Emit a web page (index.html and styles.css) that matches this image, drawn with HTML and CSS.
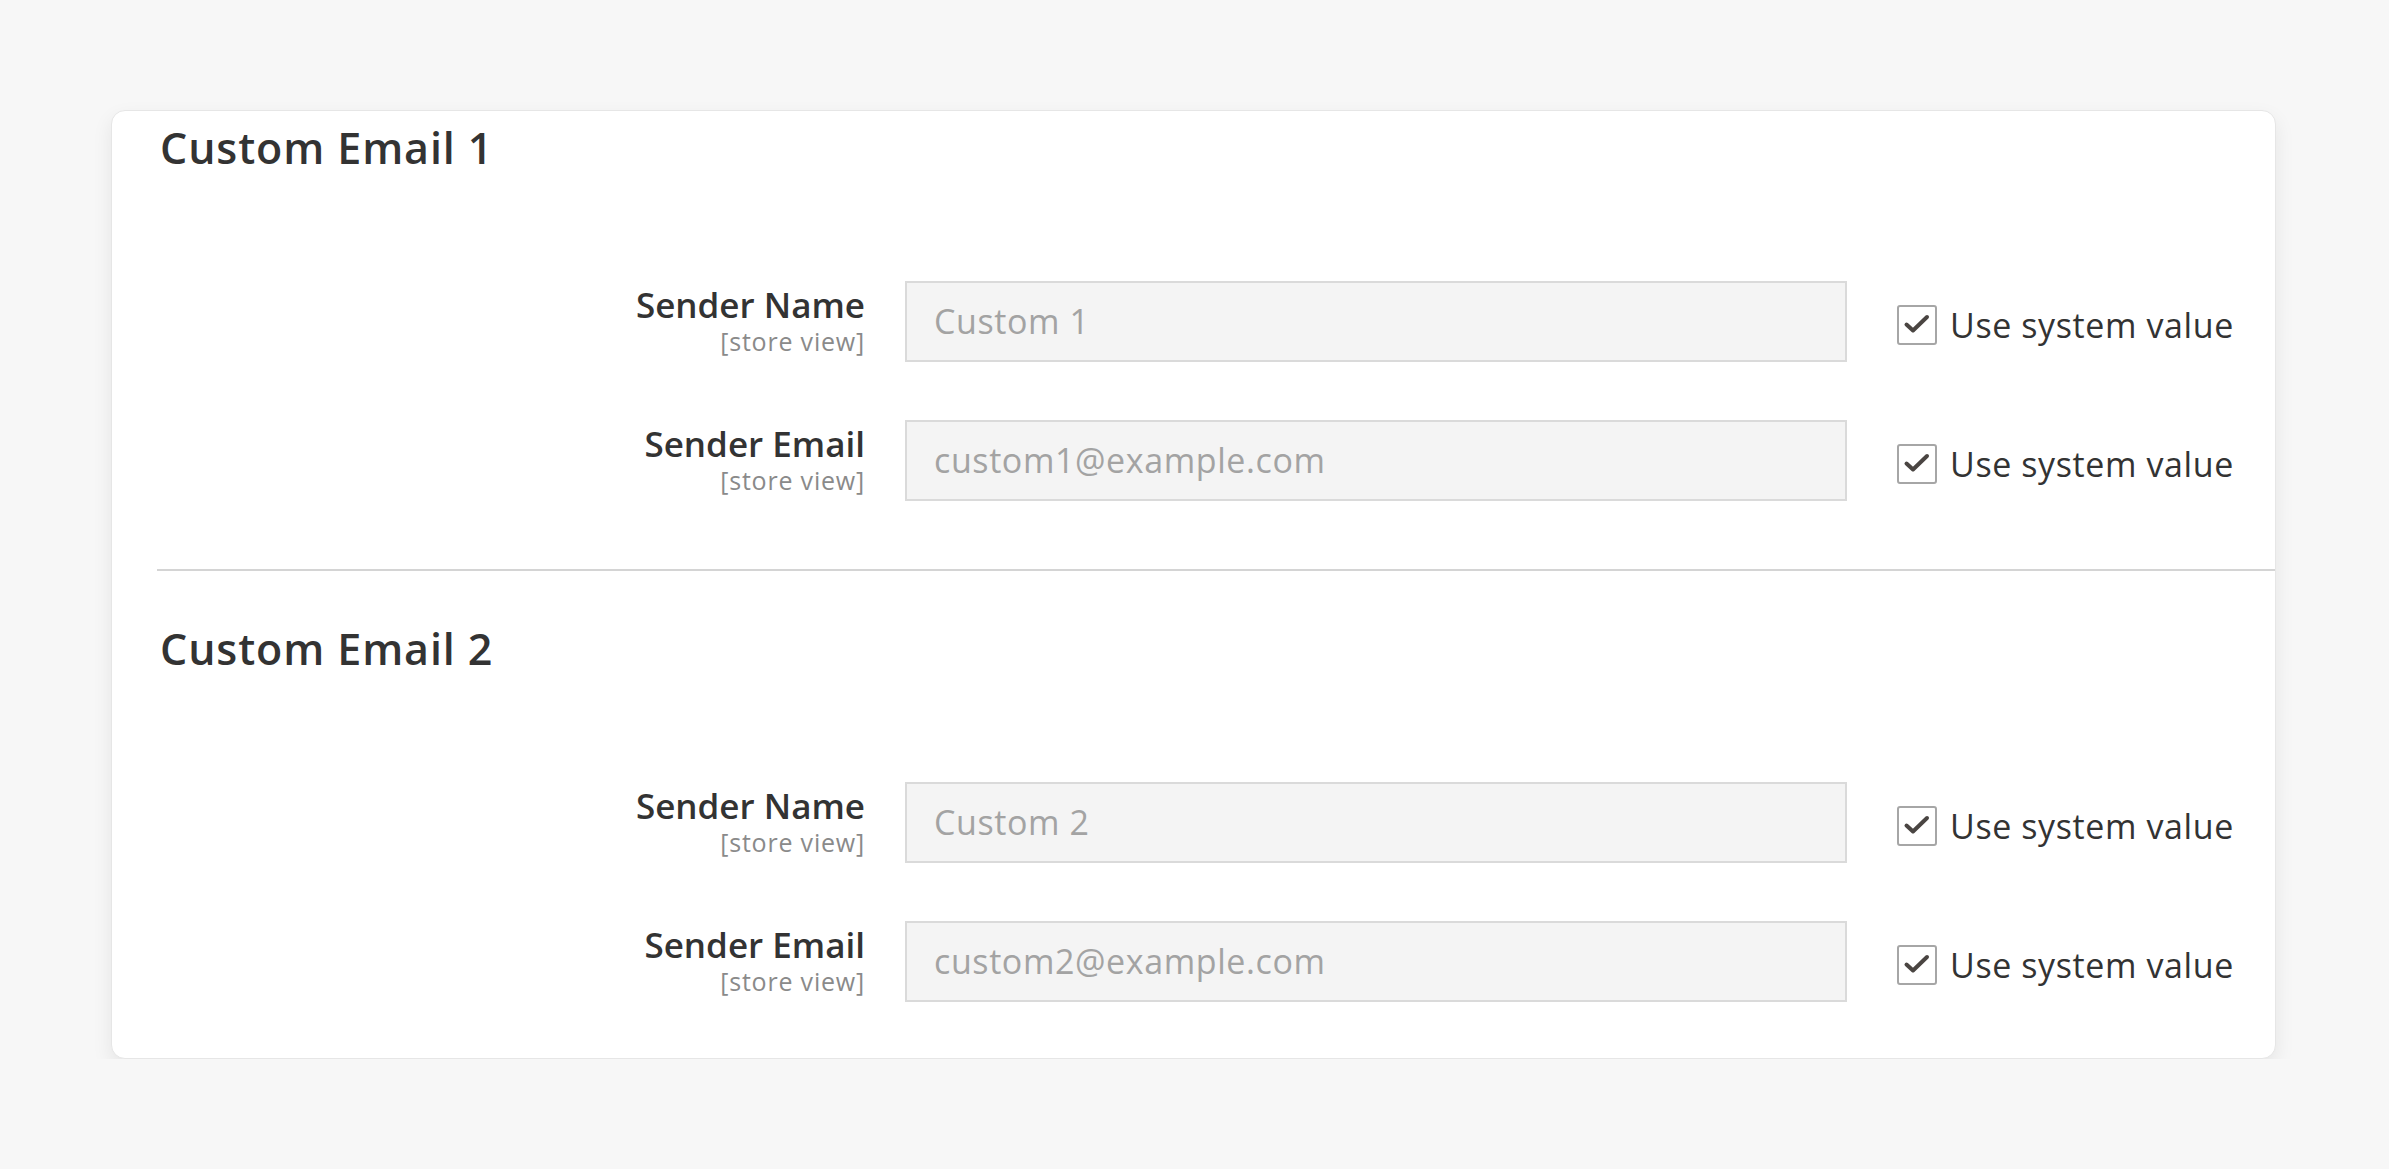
FILE: index.html
```html
<!DOCTYPE html>
<html>
    <head>
        <meta charset="utf-8">
        <title>Custom Emails</title>
        <link rel="stylesheet" href="styles.css">
    </head>
    <body>
        <div id="card">
            <div class="section">
                <h2 class="title">Custom Email 1</h2>
                <div class="fields">
                    <div class="row">
                        <div class="label">
                            <span class="name">Sender Name</span>
                            <span class="scope">[store view]</span>
                        </div>
                        <div class="input">Custom 1</div>
                        <div class="sys">
                            <span class="box"><svg viewBox="0 0 36 36"><path d="M7.5 17.5 L14 23.5 L28 10" fill="none" stroke="#4a4542" stroke-width="4" stroke-linecap="round" stroke-linejoin="round"/></svg></span>
                            <span class="sys-text">Use system value</span>
                        </div>
                    </div>
                    <div class="row">
                        <div class="label">
                            <span class="name">Sender Email</span>
                            <span class="scope">[store view]</span>
                        </div>
                        <div class="input">custom1@example.com</div>
                        <div class="sys">
                            <span class="box"><svg viewBox="0 0 36 36"><path d="M7.5 17.5 L14 23.5 L28 10" fill="none" stroke="#4a4542" stroke-width="4" stroke-linecap="round" stroke-linejoin="round"/></svg></span>
                            <span class="sys-text">Use system value</span>
                        </div>
                    </div>
                </div>
            </div>
            <div class="divider"></div>
            <div class="section">
                <h2 class="title">Custom Email 2</h2>
                <div class="fields">
                    <div class="row">
                        <div class="label">
                            <span class="name">Sender Name</span>
                            <span class="scope">[store view]</span>
                        </div>
                        <div class="input">Custom 2</div>
                        <div class="sys">
                            <span class="box"><svg viewBox="0 0 36 36"><path d="M7.5 17.5 L14 23.5 L28 10" fill="none" stroke="#4a4542" stroke-width="4" stroke-linecap="round" stroke-linejoin="round"/></svg></span>
                            <span class="sys-text">Use system value</span>
                        </div>
                    </div>
                    <div class="row">
                        <div class="label">
                            <span class="name">Sender Email</span>
                            <span class="scope">[store view]</span>
                        </div>
                        <div class="input">custom2@example.com</div>
                        <div class="sys">
                            <span class="box"><svg viewBox="0 0 36 36"><path d="M7.5 17.5 L14 23.5 L28 10" fill="none" stroke="#4a4542" stroke-width="4" stroke-linecap="round" stroke-linejoin="round"/></svg></span>
                            <span class="sys-text">Use system value</span>
                        </div>
                    </div>
                </div>
            </div>
        </div>
    </body>
</html>
```
FILE: styles.css
```css
body {
    margin: 0;
    background: #f7f7f7;
    font-family: "Open Sans", "Liberation Sans", sans-serif;
    color: #303030;
}

#card {
    margin: 110px 0 0 111px;
    width: 2165px;
    box-sizing: border-box;
    background: #ffffff;
    border: 1px solid #e6e6e6;
    border-radius: 14px;
    box-shadow: 0 8px 20px rgba(0, 0, 0, 0.08);
    padding: 12px 0 56px 0;
}

.title {
    margin: 0 0 0 48px;
    font-size: 43px;
    line-height: 50px;
    letter-spacing: 0.9px;
    font-weight: 600;
    color: #333333;
}

.fields {
    margin-top: 108px;
    display: flex;
    flex-direction: column;
    gap: 58px;
}

.row {
    display: grid;
    grid-template-columns: 753px 942px auto;
    column-gap: 40px;
    align-items: start;
}

.label {
    display: flex;
    flex-direction: column;
    align-items: flex-end;
    margin-top: 4px;
}

.name {
    font-size: 35px;
    line-height: 40px;
    font-weight: 600;
    color: #333333;
}

.scope {
    margin-top: 3px;
    font-size: 25px;
    line-height: 26px;
    letter-spacing: 0.8px;
    color: #8a8a8a;
}

.input {
    box-sizing: border-box;
    height: 81px;
    padding-left: 27px;
    background: #f4f4f4;
    border: 2px solid #dadada;
    font-size: 34px;
    line-height: 77px;
    letter-spacing: 0.6px;
    color: #a3a3a3;
}

.sys {
    display: flex;
    align-items: center;
    gap: 13px;
    margin: 24px 0 0 10px;
}

.box {
    box-sizing: border-box;
    width: 40px;
    height: 40px;
    border: 2px solid #a6a6a6;
    border-radius: 3px;
}

.box svg {
    display: block;
    width: 36px;
    height: 36px;
}

.sys-text {
    font-size: 34px;
    line-height: 40px;
    letter-spacing: 0.6px;
    color: #333333;
}

.divider {
    margin: 68px 0 53px 45px;
    height: 2px;
    background: #d4d4d4;
}
```
